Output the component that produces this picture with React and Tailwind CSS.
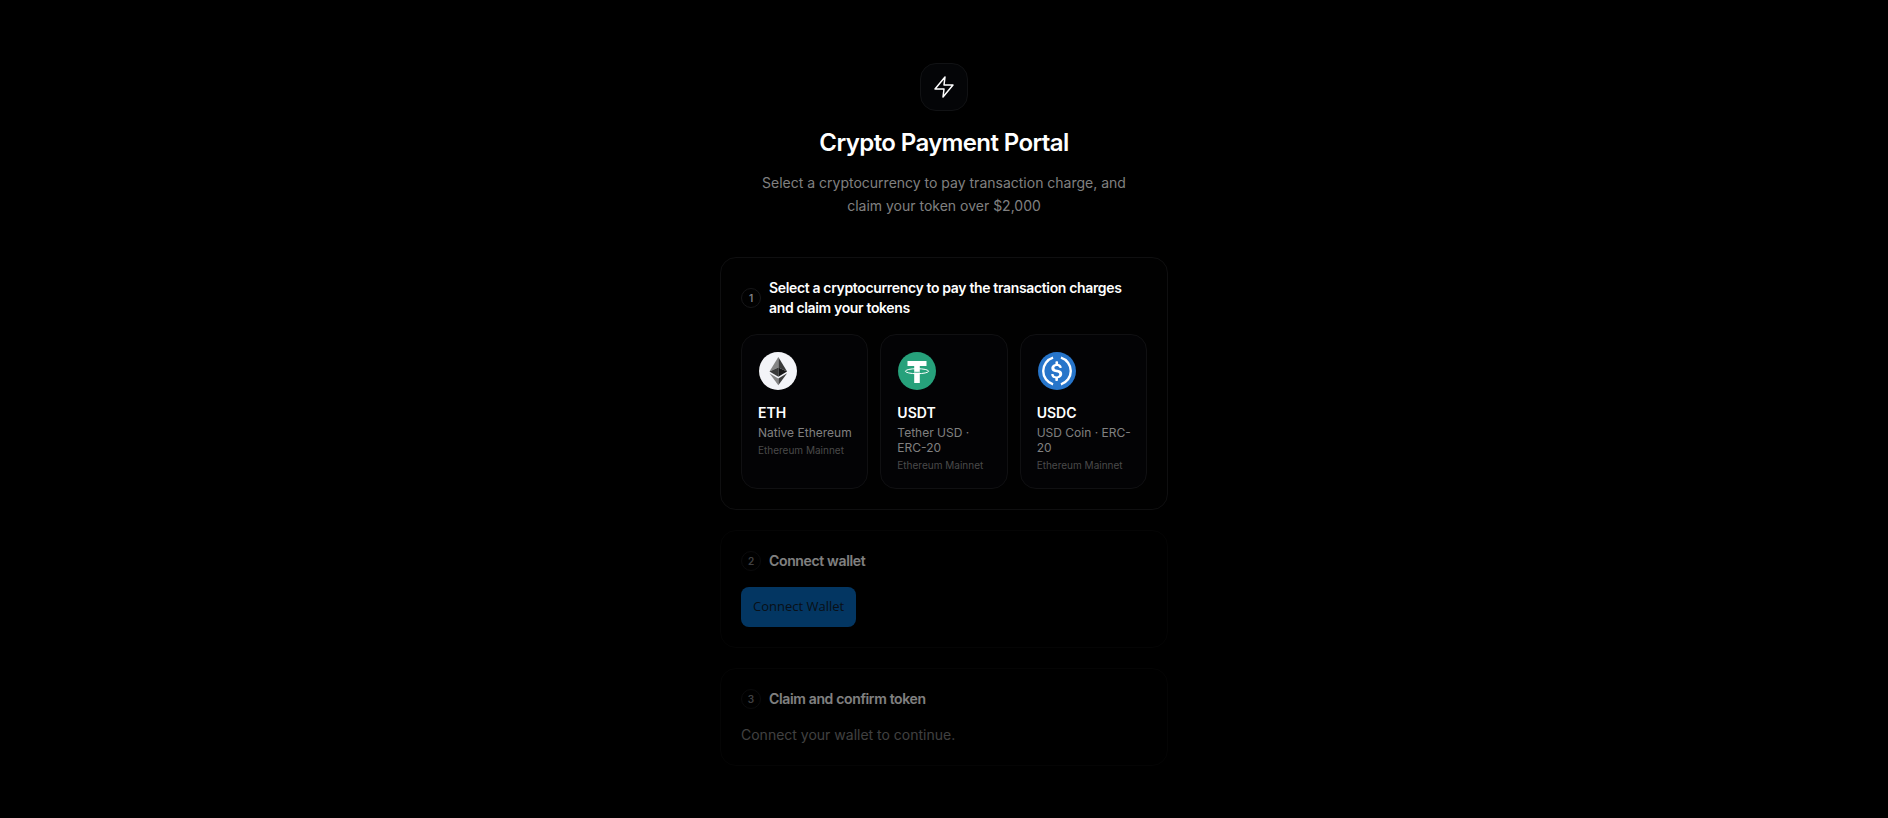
import { useState } from 'react';

const BoltIcon = () => (
  <svg viewBox="0 0 24 24" className="w-6 h-6" fill="none" stroke="currentColor" strokeWidth="1.5" strokeLinejoin="round" aria-hidden="true">
    <polygon points="13 2 3 14 12 14 11 22 21 10 12 10 13 2" />
  </svg>
);

const EthIcon = () => (
  <svg viewBox="0 0 38 38" className="w-full h-full" aria-hidden="true">
    <circle cx="19" cy="19" r="19" fill="#f3f4f8" />
    <path d="M19.300 5v10.500l8.800 4z" fill="#3a3a3a" />
    <path d="M19.300 5l-8.800 14.500 8.800-4z" fill="#868686" />
    <path d="M19.300 15.500v9.300l8.800-5.300z" fill="#161616" />
    <path d="M19.300 15.500l-8.800 4 8.800 5.300z" fill="#3a3a3a" />
    <path d="M19.300 26.500v6.800l8.800-12z" fill="#3f3f3f" />
    <path d="M19.300 33.300v-6.800l-8.800-5.200z" fill="#868686" />
  </svg>
);

const UsdtIcon = () => (
  <svg viewBox="0 0 38 38" className="w-full h-full" aria-hidden="true">
    <circle cx="19" cy="19" r="19" fill="#26a17b" />
    <path d="M9.5 9h19v5h-6.7v17h-5.6V14H9.5z" fill="#fff" />
    <ellipse cx="19" cy="19.2" rx="11.6" ry="2.5" fill="none" stroke="#fff" strokeWidth="1" />
    <path d="M16.2 20.2c1.8.2 3.8.2 5.6 0" fill="none" stroke="#26a17b" strokeWidth="0.8" />
  </svg>
);

const UsdcIcon = () => (
  <svg viewBox="0 0 32 32" className="w-full h-full" aria-hidden="true">
    <circle cx="16" cy="16" r="16" fill="#2775ca" />
    <path
      d="M20.4 18.5c0-2.3-1.4-3.1-4.2-3.5-2-.3-2.4-.8-2.4-1.7s.7-1.6 2-1.6c1.2 0 1.9.4 2.2 1.4.1.2.2.3.4.3h1.1c.3 0 .5-.2.5-.5v-.1a3.5 3.5 0 0 0-3.1-2.8V8.400c0-.3-.2-.5-.6-.6h-1c-.3 0-.5.2-.6.6v1.6c-2.100.3-3.500 1.700-3.500 3.500 0 2.200 1.400 3.100 4.200 3.500 1.900.3 2.500.7 2.500 1.800s-1 1.800-2.200 1.800c-1.700 0-2.300-.7-2.500-1.700-.1-.3-.2-.4-.5-.4h-1.100c-.3 0-.5.2-.5.5v.1c.3 1.600 1.300 2.800 3.500 3.100v1.600c0 .3.2.5.6.6h1c.3 0 .5-.2.6-.6v-1.600c2.200-.4 3.600-1.800 3.600-3.700z"
      fill="#fff"
    />
    <path
      d="M12.7 4.800a11.700 11.700 0 0 0 0 22.400M19.300 4.800a11.700 11.700 0 0 1 0 22.400"
      fill="none"
      stroke="#fff"
      strokeWidth="2"
    />
  </svg>
);

const TOKENS = [
  { symbol: 'ETH', name: 'Native Ethereum', network: 'Ethereum Mainnet', Icon: EthIcon },
  { symbol: 'USDT', name: 'Tether USD · ERC-20', network: 'Ethereum Mainnet', Icon: UsdtIcon },
  { symbol: 'USDC', name: 'USD Coin · ERC-20', network: 'Ethereum Mainnet', Icon: UsdcIcon },
];

const Step = ({ number, title, locked, children }) => (
  <section
    className={`rounded-2xl border p-5 ${
      locked ? 'border-[#0a0a0a] bg-black opacity-50' : 'border-[#0f0f10] bg-[#010101]'
    }`}
  >
    <div className="flex items-center gap-2 mb-4">
      <span className="flex items-center justify-center w-5 h-5 shrink-0 rounded-full border border-[#161618] text-[10px] font-semibold text-[#808085]">
        {number}
      </span>
      <h2 className="text-sm leading-5 font-semibold tracking-tight">{title}</h2>
    </div>
    {children}
  </section>
);

const App = () => {
  const [selected, setSelected] = useState(null);

  return (
    <main className="min-h-screen bg-black px-4 text-white font-['Inter',sans-serif]">
      <div className="mx-auto max-w-md pt-[63px] pb-12">
        {/* Header */}
        <header className="flex flex-col items-center text-center mb-10">
          <div className="w-12 h-12 mb-4 flex items-center justify-center rounded-2xl border border-[#111214] bg-[#040507]">
            <BoltIcon />
          </div>
          <h1 className="text-2xl font-semibold tracking-tight">Crypto Payment Portal</h1>
          <p className="mt-3 max-w-sm text-sm leading-[23px] text-[#808080]">
            Select a cryptocurrency to pay transaction charge, and claim your token over $2,000
          </p>
        </header>

        {/* Steps */}
        <div className="space-y-5">
          <Step number={1} title="Select a cryptocurrency to pay the transaction charges and claim your tokens">
            <div className="grid grid-cols-3 gap-3">
              {TOKENS.map(({ symbol, name, network, Icon }) => (
                <button
                  key={symbol}
                  type="button"
                  aria-pressed={selected === symbol}
                  onClick={() => setSelected(symbol)}
                  className="flex flex-col items-start rounded-2xl border border-[#101012] bg-[#030305] py-4 pl-4 pr-3 text-left"
                >
                  <span className="w-10 h-10 p-px mb-3">
                    <Icon />
                  </span>
                  <span className="text-sm leading-5 font-semibold">{symbol}</span>
                  <span className="mt-0.5 text-xs leading-[15px] text-[#808080]">{name}</span>
                  <span className="mt-1 text-[10px] leading-[13px] text-[#4a4a4a]">{network}</span>
                </button>
              ))}
            </div>
          </Step>

          <Step number={2} title="Connect wallet" locked>
            <button
              type="button"
              className="block h-10 px-3 rounded-lg bg-[#076cc4] text-[13px] text-[#12202e] font-['Open_Sans',sans-serif]"
            >
              Connect Wallet
            </button>
          </Step>

          <Step number={3} title="Claim and confirm token" locked>
            <p className="text-sm leading-5 text-[#808080]">Connect your wallet to continue.</p>
          </Step>
        </div>
      </div>
    </main>
  );
};

export default App;
